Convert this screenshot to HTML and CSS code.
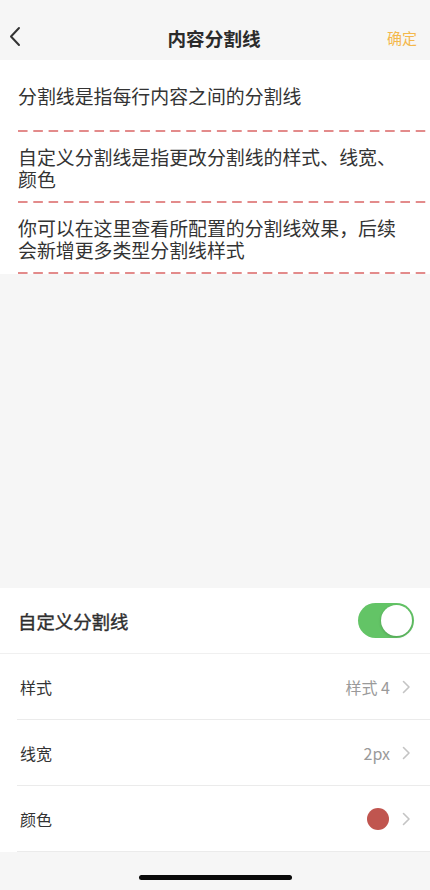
FILE: index.html
```html
<!DOCTYPE html>
<html lang="zh-CN">
<head>
<meta charset="utf-8">
<title>内容分割线</title>
<link rel="stylesheet" href="styles.css">
</head>
<body>
<div class="page">
  <header class="nav">
    <span class="nav-back">
      <svg width="14" height="22" viewBox="0 0 14 22"><polyline points="10,2 2,10.5 10,19" fill="none" stroke="#333" stroke-width="2" stroke-linecap="round" stroke-linejoin="round"/></svg>
    </span>
    <h1 class="nav-title">内容分割线</h1>
    <span class="nav-ok">确定</span>
  </header>

  <section class="preview">
    <div class="cell"><p class="cell-text">分割线是指每行内容之间的分割线</p></div>
    <div class="dash"></div>
    <div class="cell"><p class="cell-text">自定义分割线是指更改分割线的样式、线宽、颜色</p></div>
    <div class="dash"></div>
    <div class="cell"><p class="cell-text">你可以在这里查看所配置的分割线效果，后续会新增更多类型分割线样式</p></div>
    <div class="dash"></div>
  </section>

  <div class="spacer"></div>

  <section class="settings">
    <div class="switch-row">
      <span class="switch-label">自定义分割线</span>
      <span class="toggle"><span class="knob"></span></span>
    </div>
    <div class="row">
      <span class="row-label">样式</span>
      <span class="row-value">样式 4</span>
      <svg class="chev" width="9" height="14" viewBox="0 0 9 14"><polyline points="1.5,1.5 7,7 1.5,12.5" fill="none" stroke="#c4c4c4" stroke-width="1.6" stroke-linecap="round" stroke-linejoin="round"/></svg>
    </div>
    <div class="row">
      <span class="row-label">线宽</span>
      <span class="row-value">2px</span>
      <svg class="chev" width="9" height="14" viewBox="0 0 9 14"><polyline points="1.5,1.5 7,7 1.5,12.5" fill="none" stroke="#c4c4c4" stroke-width="1.6" stroke-linecap="round" stroke-linejoin="round"/></svg>
    </div>
    <div class="row">
      <span class="row-label">颜色</span>
      <span class="color-dot"></span>
      <svg class="chev" width="9" height="14" viewBox="0 0 9 14"><polyline points="1.5,1.5 7,7 1.5,12.5" fill="none" stroke="#c4c4c4" stroke-width="1.6" stroke-linecap="round" stroke-linejoin="round"/></svg>
    </div>
  </section>

  <footer class="home">
    <span class="home-bar"></span>
  </footer>
</div>
</body>
</html>
```

FILE: styles.css
```css
* { box-sizing: border-box; }
html, body {
  margin: 0;
  padding: 0;
  background: #f6f6f6;
  font-family: "Noto Sans CJK SC", "Noto Sans", sans-serif;
  color: #333;
}
.page {
  width: 430px;
  height: 890px;
  display: flex;
  flex-direction: column;
  overflow: hidden;
}
.nav {
  height: 60px;
  flex: none;
  display: flex;
  align-items: center;
  justify-content: space-between;
  padding: 14px 13px 0 9px;
  background: #f6f6f6;
}
.nav-back {
  width: 30px;
  display: flex;
  align-items: center;
}
.nav-title {
  margin: 0 0 0 2px;
  font-size: 18.6px;
  font-weight: 700;
  color: #2b2b2b;
}
.nav-ok {
  font-size: 15px;
  color: #f4b84c;
}
.preview {
  background: #fff;
  flex: none;
}
.cell {
  min-height: 69px;
  padding: 12px 18px 10px 18px;
  display: flex;
  align-items: center;
}
.cell:first-child {
  min-height: 70px;
}
.cell-text {
  margin: 0;
  font-size: 18.9px;
  line-height: 21.7px;
  color: #333;
}
.dash {
  height: 2px;
  margin-left: 18px;
  background-image: linear-gradient(to right, #e38b8b 0, #e38b8b 9.5px, transparent 9.5px);
  background-size: 15.3px 2px;
  background-repeat: repeat-x;
}
.spacer { flex: 1; }
.settings {
  flex: none;
  background: #fff;
}
.switch-row {
  height: 66px;
  display: flex;
  align-items: center;
  justify-content: space-between;
  padding: 0 16px 0 18px;
  border-bottom: 1px solid #f0f0f0;
}
.switch-label {
  font-size: 18.4px;
  font-weight: 400;
  -webkit-text-stroke: 0.4px #2e2e2e;
  color: #2e2e2e;
}
.toggle {
  width: 56px;
  height: 35px;
  border-radius: 18px;
  background: #63c466;
  display: flex;
  align-items: center;
  justify-content: flex-end;
  padding: 2px;
}
.knob {
  width: 31px;
  height: 31px;
  border-radius: 50%;
  background: #fff;
  box-shadow: 0 1px 3px rgba(0,0,0,0.2);
}
.row {
  height: 66px;
  margin-left: 17px;
  display: flex;
  align-items: center;
  padding-right: 19px;
  border-bottom: 1px solid #ebebeb;
}
.row-label {
  flex: 1;
  font-size: 16px;
  color: #333;
  padding-left: 3px;
}
.row-value {
  font-size: 16px;
  color: #9a9a9a;
  margin-right: 12px;
}
.color-dot {
  width: 22px;
  height: 22px;
  border-radius: 50%;
  background: #c0554f;
  margin-right: 13px;
}
.chev { display: block; }
.home {
  height: 38px;
  flex: none;
  display: flex;
  justify-content: center;
  padding-top: 23px;
}
.home-bar {
  width: 153px;
  height: 5px;
  border-radius: 3px;
  background: #0a0a0a;
}
```
